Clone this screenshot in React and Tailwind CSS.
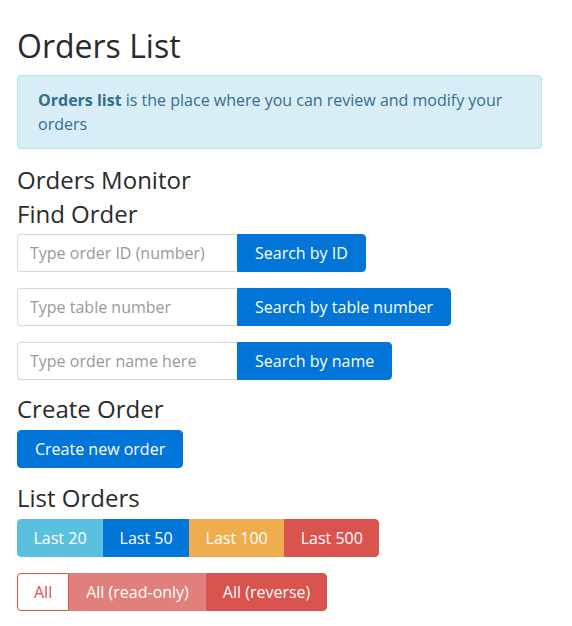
export default function App() {
  return (
    <div className="min-h-screen bg-white pl-[17px] pt-[28px] font-['Open_Sans',sans-serif] text-[#292b2c]">
      <div className="w-[525px]">
        <h1 className="text-[32px] leading-[1.1] mb-[12px]">Orders List</h1>

        <div className="rounded border border-[#bcdff1] bg-[#d9edf7] px-5 py-3 text-[16px] leading-6 text-[#31708f]">
          <strong className="font-bold">Orders list</strong> is the place where you can review and modify your orders
        </div>

        <h3 className="mt-[18px] text-[24px] leading-[1.1]">Orders Monitor</h3>
        <h3 className="mt-[7px] text-[24px] leading-[1.1]">Find Order</h3>

        <div className="mt-[7px] flex flex-col gap-4">
          <SearchRow placeholder="Type order ID (number)" label="Search by ID" />
          <SearchRow placeholder="Type table number" label="Search by table number" />
          <SearchRow placeholder="Type order name here" label="Search by name" />
        </div>

        <h3 className="mt-[16px] text-[24px] leading-[1.1]">Create Order</h3>
        <button className="mt-[8px] h-[38px] rounded border border-[#0275d8] bg-[#0275d8] px-[17px] text-[16px] text-white">Create new order</button>

        <h3 className="mt-[17px] text-[24px] leading-[1.1]">List Orders</h3>
        <div className="mt-[7px] flex">
          <button className="h-[38px] rounded-l border border-[#5bc0de] bg-[#5bc0de] px-[15.5px] text-[16px] text-white">Last 20</button>
          <button className="h-[38px] border border-[#0275d8] bg-[#0275d8] px-[15.5px] text-[16px] text-white">Last 50</button>
          <button className="h-[38px] border border-[#f0ad4e] bg-[#f0ad4e] px-[15.5px] text-[16px] text-white">Last 100</button>
          <button className="h-[38px] rounded-r border border-[#d9534f] bg-[#d9534f] px-[15.5px] text-[16px] text-white">Last 500</button>
        </div>

        <div className="mt-4 flex">
          <button className="h-[38px] rounded-l border border-[#d9534f] bg-white px-4 text-[16px] text-[#d9534f]">All</button>
          <button className="h-[38px] border border-[#e07f7b] bg-[#e07f7b] px-4 text-[16px] text-white">All (read-only)</button>
          <button className="h-[38px] rounded-r border border-[#d9534f] bg-[#d9534f] px-4 text-[16px] text-white">All (reverse)</button>
        </div>
      </div>
    </div>
  );
}

function SearchRow({ placeholder, label }) {
  return (
    <div className="flex">
      <input
        type="text"
        placeholder={placeholder}
        className="h-[38px] w-[220px] rounded-l border border-r-0 border-[#d9d9d9] px-3 text-[16px] text-[#464a4c] outline-none placeholder:text-[#999]"
      />
      <button className="h-[38px] rounded-r border border-[#0275d8] bg-[#0275d8] px-[17px] text-[16px] text-white">{label}</button>
    </div>
  );
}
